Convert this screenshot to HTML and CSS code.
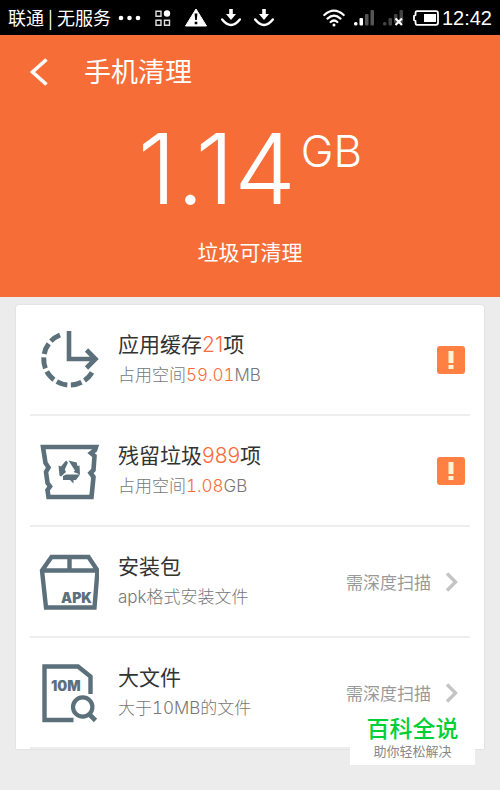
FILE: index.html
```html
<!DOCTYPE html>
<html lang="zh-CN">
<head>
<meta charset="utf-8">
<meta name="viewport" content="width=device-width, initial-scale=1">
<title>手机清理</title>
<link rel="stylesheet" href="styles.css">
</head>
<body>
<div class="status">
  <span class="carrier">联通 | 无服务</span>
  <svg class="dots" width="24" height="20" viewBox="0 0 24 20" fill="#fff"><circle cx="3" cy="10" r="2.300"/><circle cx="11.500" cy="10" r="2.300"/><circle cx="20" cy="10" r="2.300"/></svg>
  <svg class="tiles" width="16" height="20" viewBox="0 0 16 20" fill="none" stroke="#ddd" stroke-width="1.400"><path d="M1 3.200h5v5H1zM1 12.200h5v5H1zM9.500 12.200h5v5h-5z"/><circle cx="12" cy="5.500" r="3.200" fill="#fff" stroke="none"/></svg>
  <svg class="alert" width="24" height="20" viewBox="0 0 24 20"><path d="M12 1 22.500 18H1.500z" fill="#fff" stroke="#fff" stroke-linejoin="round"/><path d="M10.600 5.500h2.800l-.6 6.500h-1.600zM10.700 13.700h2.600v2.600h-2.600z" fill="#000"/></svg>
  <svg class="load" width="20" height="20" viewBox="0 0 20 20" fill="#fff"><path d="M8.200 1h3.600v5h3.200l-5 6-5-6h3.200z"/><path d="M1.200 11.500q8.800 11 17.600 0" fill="none" stroke="#fff" stroke-width="2.400" stroke-linecap="round"/></svg>
  <svg class="load" width="20" height="20" viewBox="0 0 20 20" fill="#fff"><path d="M8.200 1h3.600v5h3.200l-5 6-5-6h3.200z"/><path d="M1.200 11.500q8.800 11 17.600 0" fill="none" stroke="#fff" stroke-width="2.400" stroke-linecap="round"/></svg>
  <span class="right">
    <svg width="22" height="20" viewBox="0 0 22 20" fill="none" stroke="#fff" stroke-width="2.200" stroke-linecap="round"><path d="M1.300 7q9.700-8.600 19.400 0M4.500 10.600q6.500-5.800 13 0M7.700 14q3.300-3 6.600 0"/><circle cx="11" cy="17" r="1.500" fill="#fff" stroke="none"/></svg>
    <svg width="20" height="20" viewBox="0 0 20 20" fill="#fff"><rect y="14" width="3.500" height="3.500" rx="1.500"/><rect x="5.500" y="10" width="3.500" height="7.500" rx="1"/><g fill="#555"><rect x="11" y="6" width="3.500" height="11.500" rx="1"/><rect x="16.500" y="2" width="3.500" height="15.500" rx="1"/></g></svg>
    <svg width="21" height="20" viewBox="0 0 21 20" fill="#444"><rect y="14" width="3.500" height="3.500" rx="1.500"/><rect x="5.500" y="10" width="3.500" height="7.500" rx="1"/><rect x="11" y="6" width="3.500" height="9" rx="1"/><rect x="16.500" y="2" width="3.500" height="13" rx="1"/><path d="m12.500 10.500 6.500 6.500m0-6.500L12.500 17" stroke="#fff" stroke-width="2.200"/></svg>
    <svg width="26" height="20" viewBox="0 0 26 20"><path d="M4 3.200h19q2 0 2 2v9.600q0 2-2 2H4q-1.400 0-1.500-2V13L1 12V8l1.500-1V5.200Q2.600 3.200 4 3.200z" fill="none" stroke="#fff" stroke-width="1.800"/><path d="M11 6h12v8H11z" fill="#fff"/></svg>
    <time>12:42</time>
  </span>
</div>
<header class="hero">
  <div class="bar">
    <button class="back" aria-label="返回"><svg width="20" height="28" viewBox="0 0 20 28"><path d="M17.500 1.500 3.500 14l14 12.500" fill="none" stroke="#fff" stroke-width="3.600"/></svg></button>
    <h1>手机清理</h1>
  </div>
  <div class="total"><span class="amount">1.14</span><span class="unit">GB</span></div>
  <p class="caption">垃圾可清理</p>
</header>
<main>
  <ul class="card">
    <li><a class="row" href="#cache">
      <svg class="icon" viewBox="0 0 60 60" fill="none" stroke="#5b707a"><path d="M21 5A26 26 0 1 0 53 42.500" pathLength="98" stroke-width="5" stroke-dasharray="11 3.500"/><path d="M30 1v28h25M47.500 20l9 9-9 9" stroke-width="4.600"/></svg>
      <span class="text"><span class="name">应用缓存<em>21</em>项</span><span class="info">占用空间<em>59.01</em>MB</span></span>
      <svg class="badge" viewBox="0 0 28 28"><rect width="28" height="28" rx="3" fill="#ff8042"/><path d="M11.500 5h5v12h-5zM11.500 19h5v4h-5z" fill="#fff3d3"/></svg>
    </a></li>
    <li><a class="row" href="#residue">
      <svg class="icon" viewBox="0 0 60 60" fill="none" stroke="#5b707a"><path d="M4 6h53l-1 3-4 3 3.500 3-1 14-3 3 3 4-2 20h-43L8.500 49l2.500-3.500L8.500 42 7 31l2.500-4.500L6.500 22z" stroke-width="4.600"/><path d="m19.500 24.500 2.500 1 5-6 2 2-3.200 7 1.200 2.500-5 4.500-1.500-1zM29.500 19.500l8.200 2 .8 3.500 2-.5.500 9-6.500-2.500 1.500-1.500-2-3zM24 35l3-1.500h14L37 39h-2.500v3.500L31 39h-7z" fill="#5b707a" stroke="none"/></svg>
      <span class="text"><span class="name">残留垃圾<em>989</em>项</span><span class="info">占用空间<em>1.08</em>GB</span></span>
      <svg class="badge" viewBox="0 0 28 28"><rect width="28" height="28" rx="3" fill="#ff8042"/><path d="M11.500 5h5v12h-5zM11.500 19h5v4h-5z" fill="#fff3d3"/></svg>
    </a></li>
    <li><a class="row" href="#apk">
      <svg class="icon" viewBox="0 0 60 60" fill="none" stroke="#5b707a"><path d="M3 18.500 12.500 5h37L58.500 18.500 55.500 55.500h-48.500zM3 18.500h55.500M30.500 5v13" stroke-width="4.400"/><text class="icon-label" x="22" y="51">APK</text></svg>
      <span class="text"><span class="name">安装包</span><span class="info">apk格式安装文件</span></span>
      <span class="hint">需深度扫描</span>
      <svg class="arrow" viewBox="0 0 14 20"><path d="m2 1.500 8.500 8.500L2 18.500" fill="none" stroke="#c4c4c4" stroke-width="3.400"/></svg>
    </a></li>
    <li><a class="row" href="#large">
      <svg class="icon" viewBox="0 0 60 60" fill="none" stroke="#5b707a"><path d="M34.500 57H5.500V3.500H39l12.500 10V31" stroke-width="4.400"/><circle cx="43.700" cy="44" r="9.700" stroke-width="4.200"/><path d="m50 51 6.500 6.500" stroke-width="4.600"/><text class="icon-label" x="12" y="28">10M</text></svg>
      <span class="text"><span class="name">大文件</span><span class="info">大于10MB的文件</span></span>
      <span class="hint">需深度扫描</span>
      <svg class="arrow" viewBox="0 0 14 20"><path d="m2 1.500 8.500 8.500L2 18.500" fill="none" stroke="#c4c4c4" stroke-width="3.400"/></svg>
    </a></li>
  </ul>
</main>
<aside class="mark"><strong>百科全说</strong><span>助你轻松解决</span></aside>
</body>
</html>
```
FILE: styles.css
```css
@charset "utf-8";
* { box-sizing: border-box; }
body {
  position: relative;
  margin: 0;
  min-height: 100vh;
  background: #ececec;
  color: #333;
  font-family: Inter, "Noto Sans CJK SC", sans-serif;
}
svg { display: block; flex: none; }
em { font-style: normal; font-weight: 300; color: #fb6a3a; }

.status {
  display: flex;
  align-items: center;
  height: 35px;
  padding: 0 8px;
  background: #000;
  color: #fff;
}
.carrier {
  font-family: "Noto Sans CJK SC", sans-serif;
  font-size: 18px;
  line-height: 35px;
  white-space: nowrap;
}
.dots { margin-left: 7px; }
.tiles, .alert, .load { margin-left: 13px; }
.right {
  display: flex;
  align-items: center;
  gap: 9px;
  margin-left: auto;
}
time { font: 300 20px/36px "Liberation Sans", sans-serif; margin-left: -6px; }

.hero { padding-bottom: 29px; background: #f66d37; color: #fff; }
.bar {
  display: flex;
  align-items: center;
  gap: 35px;
  height: 74px;
  padding-left: 29px;
}
.back { padding: 0; border: 0; background: none; }
h1 { margin: 0; padding-top: 2px; font-size: 27px; font-weight: 400; line-height: 40px; }
.total {
  display: flex;
  justify-content: center;
  align-items: flex-start;
  height: 129px;
  padding-top: 12px;
}
.amount { font-size: 98px; font-weight: 300; line-height: 96px; }
.unit { margin-left: 5px; font-size: 44px; font-weight: 300; line-height: 60px; }
.caption { margin: 0; font-size: 21px; line-height: 30px; text-align: center; }

main { padding: 8px 16px; }
.card {
  margin: 0;
  padding: 0 14px;
  list-style: none;
  background: #fff;
  border-radius: 3px 3px 0 0;
  box-shadow: 0 0 2px #ccc;
}
.row {
  display: flex;
  align-items: center;
  height: 111px;
  padding: 0 5px 0 9px;
  border-bottom: 2px solid #eee;
  color: inherit;
  text-decoration: none;
}
.icon { width: 60px; height: 60px; }
.icon-label {
  fill: #5b707a;
  stroke: none;
  font-size: 14px;
  font-weight: 900;
}
.text { flex: 1; margin-left: 19px; }
.name, .info { display: block; line-height: 30px; }
.name { font-size: 21px; }
.info { font-size: 17px; font-variant-numeric: tabular-nums; font-weight: 300; color: #777; }
.hint { font-size: 17px; color: #999; }
.badge { width: 28px; height: 28px; }
.arrow { width: 14px; height: 20px; margin: 0 6px 0 14px; }

.mark {
  position: absolute;
  right: 25px;
  bottom: 25px;
  width: 125px;
  height: 50px;
  background: #fff;
  text-align: center;
}
.mark strong, .mark span { display: block; }
.mark strong { font-size: 23px; font-weight: 500; line-height: 28px; color: #00d036; }
.mark span { font-size: 13px; line-height: 16px; color: #888; }
```
